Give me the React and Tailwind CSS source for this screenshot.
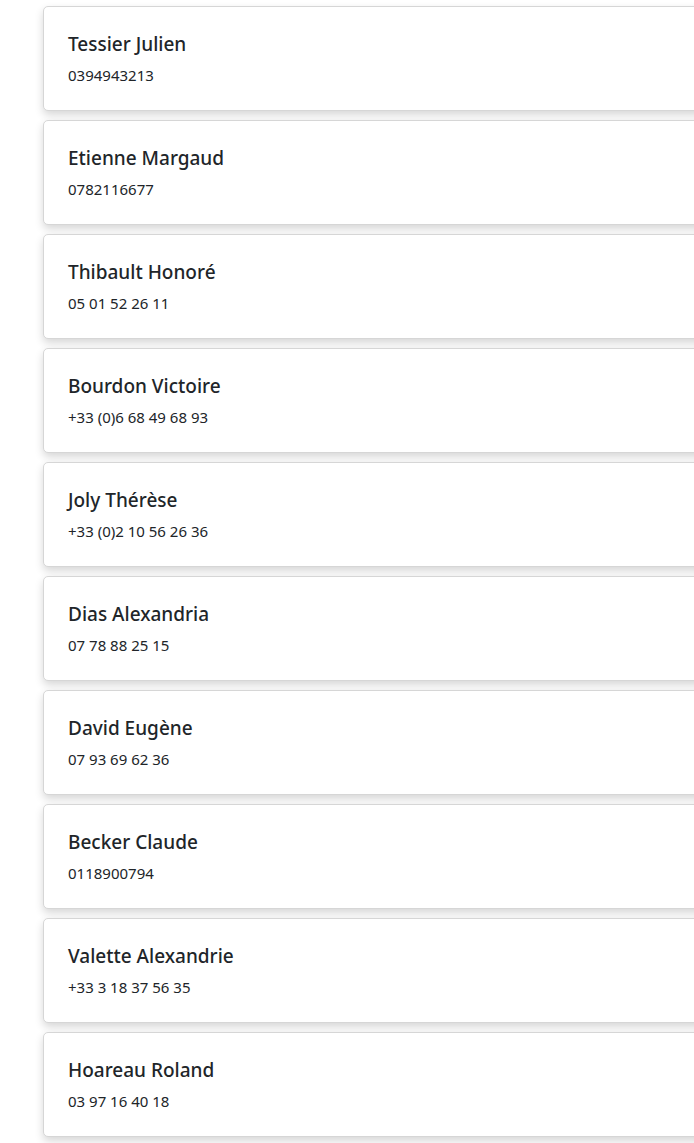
const contacts = [
  { name: "Tessier Julien", phone: "0394943213" },
  { name: "Etienne Margaud", phone: "0782116677" },
  { name: "Thibault Honoré", phone: "05 01 52 26 11" },
  { name: "Bourdon Victoire", phone: "+33 (0)6 68 49 68 93" },
  { name: "Joly Thérèse", phone: "+33 (0)2 10 56 26 36" },
  { name: "Dias Alexandria", phone: "07 78 88 25 15" },
  { name: "David Eugène", phone: "07 93 69 62 36" },
  { name: "Becker Claude", phone: "0118900794" },
  { name: "Valette Alexandrie", phone: "+33 3 18 37 56 35" },
  { name: "Hoareau Roland", phone: "03 97 16 40 18" },
];

export default function App() {
  return (
    <div className="min-h-screen bg-white font-['Noto_Sans',sans-serif] text-[#212529] overflow-hidden">
      <div className="flex flex-col gap-[9px] pt-[6px] pl-[43px] -mr-[20px]">
        {contacts.map((c) => (
          <div
            key={c.name}
            className="h-[105px] bg-white border border-[#d6d6d6] rounded-[5px] shadow-[0_4px_8px_rgba(0,0,0,0.16)] px-[24px] pt-[25px]"
          >
            <h2 className="text-[19px] leading-[24px] font-medium">{c.name}</h2>
            <p className="text-[15px] leading-[20px] mt-[9px]">{c.phone}</p>
          </div>
        ))}
      </div>
    </div>
  );
}
